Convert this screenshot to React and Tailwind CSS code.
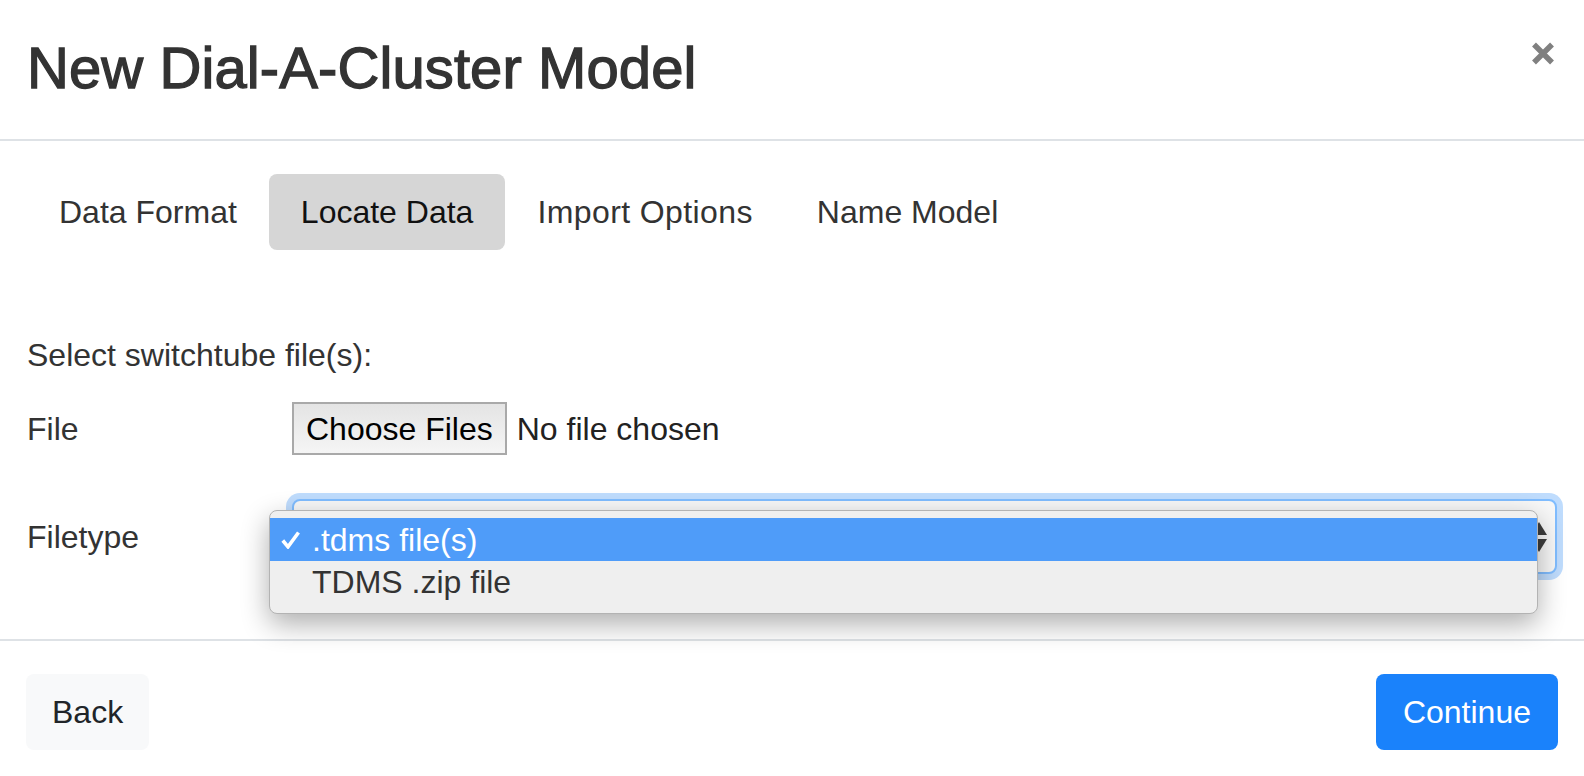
import React from "react";

export default function App() {
  const tabs = ["Data Format", "Locate Data", "Import Options", "Name Model"];
  return (
    <div
      className="w-[1584px] h-[776px] bg-white flex flex-col text-[#333] overflow-hidden"
      style={{ fontFamily: '"Liberation Sans", Arial, Helvetica, sans-serif' }}
    >
      {/* Header */}
      <div className="h-[141px] shrink-0 border-b-2 border-[#dee2e6] flex justify-between items-start px-[27px]">
        <h3 className="mt-[39px] text-[58px] leading-[58px] text-[#333] tracking-[0.1px] [-webkit-text-stroke:1.3px_#333]">
          New Dial-A-Cluster Model
        </h3>
        <svg className="mt-[42px] mr-[3px]" width="22" height="23" viewBox="0 0 22 23">
          <path d="M2 2.5 L20 20.5 M20 2.5 L2 20.5" stroke="#808080" strokeWidth="5.5" />
        </svg>
      </div>

      {/* Body */}
      <div className="h-[498px] shrink-0 px-[27px] pt-[33px] flex flex-col">
        <div className="flex h-[76px]">
          {tabs.map((t) => (
            <div
              key={t}
              className={
                t === "Locate Data"
                  ? "h-[76px] px-[32px] flex items-center rounded-[8px] bg-[#d6d6d6] text-[32px] text-[#111]"
                  : t === "Import Options"
                  ? "h-[76px] px-[32px] flex items-center rounded-[8px] text-[32px] text-[#333] tracking-[0.4px]"
                  : "h-[76px] px-[32px] flex items-center rounded-[8px] text-[32px] text-[#333]"
              }
            >
              {t}
            </div>
          ))}
        </div>

        <div className="mt-[81px] text-[32px] leading-[48px]">Select switchtube file(s):</div>

        <div className="mt-[23px] h-[53px] flex items-center">
          <div className="w-[265px] text-[32px] leading-[48px]">File</div>
          <div className="h-[53px] px-[12px] flex items-center border-2 border-[#a9a9a9] bg-gradient-to-b from-[#e4e4e4] to-[#f5f5f5] text-[32px] text-black">
            Choose Files
          </div>
          <div className="ml-[10px] text-[32px] text-[#222]">No file chosen</div>
        </div>

        <div className="mt-[44px] h-[75px] flex items-center">
          <div className="w-[265px] text-[32px] leading-[48px]">Filetype</div>
          <div className="relative flex-1 h-[75px] rounded-[8px] border-2 border-[#80bdff] ring-[6px] ring-[#bfdcfd] bg-[#f8f8f8] flex items-center justify-end pr-[7px]">
            <svg width="18" height="32" viewBox="0 0 18 32">
              <path d="M9 1 L17 14 L1 14 Z" fill="#3d3d3d" />
              <path d="M1 18 L17 18 L9 31 Z" fill="#3d3d3d" />
            </svg>

            {/* Popup menu */}
            <div className="absolute left-[-25px] top-[9px] right-[17px] h-[104px] rounded-[8px] border border-[#b3b3b3] bg-[#efefef] shadow-[0_10px_28px_rgba(0,0,0,0.32)] pt-[7px]">
              <div className="h-[43px] bg-[#4f9cf9] flex items-center text-white text-[32px]">
                <svg className="ml-[11px]" width="19" height="18" viewBox="0 0 19 18">
                  <path d="M1.8 9.5 L7 15.8 L17.5 1.5" stroke="#fff" strokeWidth="3.6" fill="none" />
                </svg>
                <span className="ml-[12px]">.tdms file(s)</span>
              </div>
              <div className="h-[42px] flex items-center text-[32px] text-[#333] pl-[42px]">TDMS .zip file</div>
            </div>
          </div>
        </div>
      </div>

      {/* Footer */}
      <div className="flex-1 border-t-2 border-[#dee2e6] px-[26px] pt-[33px] flex justify-between items-start">
        <div className="h-[76px] px-[26px] flex items-center rounded-[8px] bg-[#f8f9fa] text-[32px] text-[#212529]">
          Back
        </div>
        <div className="h-[76px] px-[27px] flex items-center rounded-[8px] bg-[#1a82fb] text-[32px] text-white">
          Continue
        </div>
      </div>
    </div>
  );
}
